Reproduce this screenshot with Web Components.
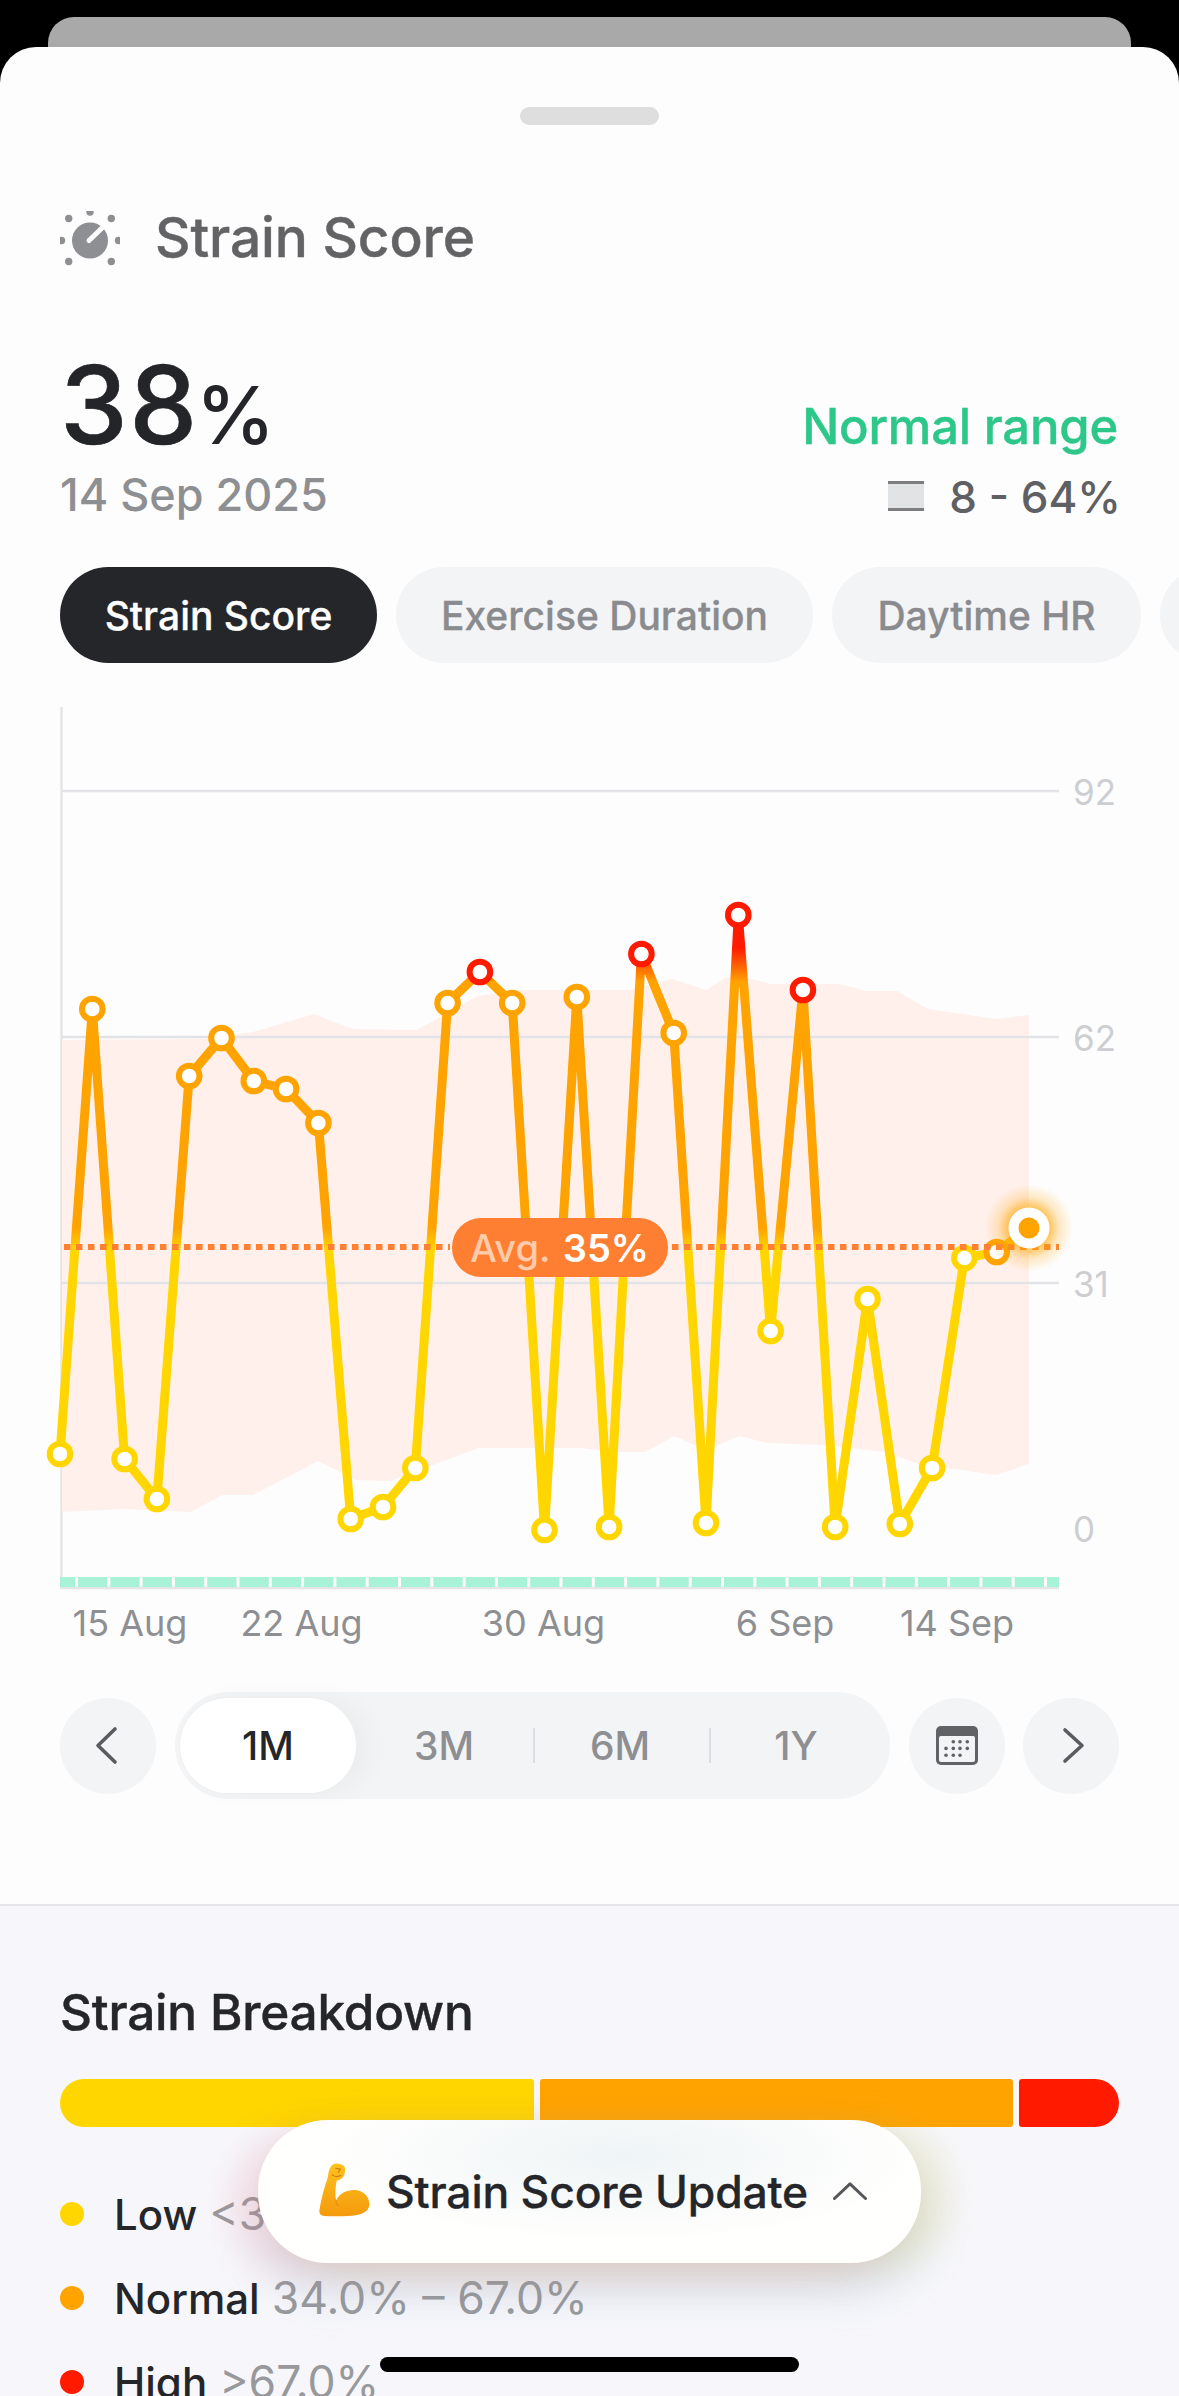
<!doctype html>
<html><head><meta charset="utf-8"><style>
html,body{margin:0;padding:0;background:#000;height:2396px;overflow:hidden;font-family:Inter,"Liberation Sans",sans-serif}
</style></head><body>
<app-shell>
<peek-card></peek-card>
<bottom-sheet>
  <sheet-handle></sheet-handle>
  <metric-header>Strain Score</metric-header>
  <score-summary></score-summary>
  <tab-row>
    <tab-chip active w="317">Strain Score</tab-chip>
    <tab-chip w="417">Exercise Duration</tab-chip>
    <tab-chip w="309">Daytime HR</tab-chip>
    <tab-chip w="200"></tab-chip>
  </tab-row>
  <trend-chart></trend-chart>
  <range-control></range-control>
  <breakdown-section>
    <legend-row color="#ffd600" name="Low" range="&lt;34.0%"></legend-row>
    <legend-row color="#ffa300" name="Normal" range="34.0% – 67.0%"></legend-row>
    <legend-row color="#ff1a00" name="High" range="&gt;67.0%"></legend-row>
  </breakdown-section>
</bottom-sheet>
<update-pill>Strain Score Update</update-pill>
<home-indicator></home-indicator>
</app-shell>
<script>
function def(name,html,init){
  customElements.define(name,class extends HTMLElement{
    connectedCallback(){
      if(this.shadowRoot)return;
      const r=this.attachShadow({mode:'open'});
      r.innerHTML=typeof html==='function'?html(this):html;
      if(init)init(this,r);
    }
  });
}
def('app-shell',`<style>:host{display:block;position:relative;width:1179px;height:2396px;overflow:hidden;background:#000;padding-top:17px;box-sizing:border-box}</style><slot></slot>`);
def('peek-card',`<style>:host{display:block;height:30px;margin:0 48px;background:#a9a9aa;border-radius:26px 26px 0 0}</style>`);
def('bottom-sheet',`<style>:host{display:block;background:#fdfdfd;border-radius:36px 36px 0 0;height:2349px;overflow:hidden}</style><slot></slot>`);
def('sheet-handle',`<style>:host{display:block;width:139px;height:18px;margin:60px auto 0;background:#dedede;border-radius:9px}</style>`);
def('metric-header',`<style>
:host{display:flex;align-items:center;height:64px;margin:84px 0 0 60px;font-size:55px;font-weight:500;color:#636366;letter-spacing:-.1px}
svg{display:block;flex:none;margin-right:35px;margin-top:-1px}
.t{margin-bottom:8px;-webkit-text-stroke:.4px #636366}
</style>
<svg width="60" height="60" viewBox="62 212 60 60"><g fill="#8e8f92"><circle cx="92" cy="241.5" r="18"/><circle cx="92" cy="213" r="3.7"/><circle cx="70.7" cy="219.5" r="3.7"/><circle cx="113.3" cy="219.5" r="3.7"/><circle cx="63.5" cy="241.5" r="3.7"/><circle cx="120.5" cy="241.5" r="3.7"/><circle cx="70.7" cy="262.5" r="3.7"/><circle cx="113.3" cy="262.5" r="3.7"/></g><path d="M91 241.5L104.5 228.5" stroke="#fdfdfd" stroke-width="5" stroke-linecap="round"/></svg><span class="t"><slot></slot></span>`);
def('score-summary',`<style>
:host{display:block;margin:77px 0 0 0;padding:0 61px 0 60px}
.row{display:flex;justify-content:space-between;align-items:baseline;height:110px}
.big{font-size:108px;line-height:110px;font-weight:500;color:#242528;letter-spacing:1.5px;-webkit-text-stroke:.6px #242528}
.pct{font-size:80px;font-weight:500;letter-spacing:0;margin-left:-3px;-webkit-text-stroke:0}
.status{font-size:49px;line-height:50px;font-weight:500;color:#2ec78a;letter-spacing:-.2px;-webkit-text-stroke:.4px #2ec78a}
.row2{margin-top:10px;height:50px}
.date{font-size:45px;line-height:50px;font-weight:500;color:#8e8f92}
.range{font-size:44px;line-height:50px;font-weight:500;color:#5f6063;display:flex;align-items:center;gap:25px;margin-right:-3px}
.range i{display:block;box-sizing:border-box;width:36px;height:30px;background:#e2e3e5;border-top:3px solid #7d7d80;border-bottom:3px solid #7d7d80;margin-top:-2px}
</style>
<div class="row"><div class="big">38<span class="pct">%</span></div><div class="status">Normal range</div></div>
<div class="row row2"><div class="date">14 Sep 2025</div><div class="range"><i></i><span>8 - 64%</span></div></div>`);
def('tab-row',`<style>:host{display:flex;gap:19px;margin-top:47px;padding-left:60px;height:96px;overflow:hidden}</style><slot></slot>`);
def('tab-chip',h=>`<style>
:host{display:flex;flex:none;align-items:center;justify-content:center;box-sizing:border-box;width:${h.getAttribute('w')}px;height:96px;border-radius:48px;background:${h.hasAttribute('active')?'#25262a':'#f3f4f6'};color:${h.hasAttribute('active')?'#fff':'#8a8b8e'};font-size:39px;font-weight:500;white-space:nowrap;-webkit-text-stroke:.3px currentColor}
</style><slot></slot>`);

/* chart */
const Y=[1454,1009,1459,1499,1076,1038,1081,1089,1123,1519,1507,1468,1003,972,1003,1530,997,1527,954,1033,1523,915,1331,990,1527,1299,1524,1468,1258,1252,1228];
const X=Y.map((_,i)=>60+32.3*i);
const topC="62,1040 203,1039 253,1032 314,1014 352,1029 417,1030 478,996 520,990 630,990 672,979 706,990 725,978 740,976 771,984 840,984 866,991 897,991 928,1009 996,1019 1029,1015";
const botC="1029,1464 996,1475 962,1470 924,1466 885,1452 824,1445 767,1443 740,1436 706,1450 674,1436 645,1452 618,1452 580,1448 536,1448 478,1448 390,1481 356,1480 318,1461 253,1495 222,1495 191,1512 126,1509 62,1512";
function ringColor(i){const y=Y[i];if(y<=995)return '#ff1a00';if(i===29)return '#ffa300';if(y<1245)return '#ffa300';return '#ffd600';}
function chartSvg(){
  let rings='';
  for(let i=0;i<30;i++)rings+=`<circle cx="${X[i].toFixed(1)}" cy="${Y[i]}" r="10.3" fill="#fff" stroke="${ringColor(i)}" stroke-width="6"/>`;
  let seg='';
  for(let i=0;i<32;i++){const a=i==0?60:78+32.3*(i-1);const b=Math.min(75+32.3*i,1059);if(a<1059)seg+=`<rect x="${a.toFixed(1)}" y="1577" width="${(i==31?1059-a:b-a).toFixed(1)}" height="10"/>`;}
  const grids=[791,1037,1283].map(y=>`<line x1="62" x2="1059" y1="${y}" y2="${y}"/>`).join('');
  const ylab=[[92,805],[62,1051],[31,1297],[0,1542]].map(([t,y])=>`<text x="1073" y="${y}">${t}</text>`).join('');
  const xlab=[['15 Aug',130],['22 Aug',301.5],['30 Aug',543.5],['6 Sep',785],['14 Sep',957]].map(([t,x])=>`<text x="${x}" y="1636" text-anchor="middle">${t}</text>`).join('');
  return `<svg width="1179" height="950" viewBox="0 700 1179 950" xmlns="http://www.w3.org/2000/svg">
  <defs>
   <linearGradient id="lg" gradientUnits="userSpaceOnUse" x1="0" x2="0" y1="900" y2="1540">
    <stop offset="0" stop-color="#ff1a00"/><stop offset="${(948-900)/640}" stop-color="#ff1a00"/>
    <stop offset="${(982-900)/640}" stop-color="#ffa300"/><stop offset="${(1228-900)/640}" stop-color="#ffa300"/>
    <stop offset="${(1250-900)/640}" stop-color="#ffd600"/><stop offset="1" stop-color="#ffd600"/>
   </linearGradient>
   <radialGradient id="glow"><stop offset=".45" stop-color="#ffa300" stop-opacity=".65"/><stop offset=".7" stop-color="#ffa300" stop-opacity=".22"/><stop offset="1" stop-color="#ffa300" stop-opacity="0"/></radialGradient>
  </defs>
  <line x1="61.5" x2="61.5" y1="707" y2="1588" stroke="#e4e5e7" stroke-width="2.5"/>
  <polygon points="${topC} ${botC}" fill="#fff0eb"/>
  <g stroke="#e2e3e6" stroke-width="2.5">${grids}</g>
  <line x1="60" x2="1059" y1="1588" y2="1588" stroke="#e4e5e7" stroke-width="2.5"/>
  <g fill="#a8f2d8">${seg}</g>
  <polyline points="${X.map((x,i)=>x.toFixed(1)+','+Y[i]).join(' ')}" fill="none" stroke="url(#lg)" stroke-width="9" stroke-linejoin="miter" stroke-miterlimit="3"/>
  ${rings}
  <line x1="64" x2="450" y1="1247" y2="1247" stroke="#ff8033" stroke-width="6" stroke-dasharray="6.5 5.5"/>
  <line x1="672" x2="1059" y1="1247" y2="1247" stroke="#ff8033" stroke-width="6" stroke-dasharray="6.5 5.5"/>
  <circle cx="1029" cy="1228" r="44" fill="url(#glow)"/>
  <circle cx="1029" cy="1228" r="15.5" fill="#ffa300" stroke="#fff" stroke-width="10"/>
  <rect x="452" y="1218" width="216" height="59" rx="29" fill="#ff7f32"/>
  <text x="470" y="1262" font-size="38" font-weight="500" fill="#fff" fill-opacity=".6">Avg.</text>
  <text x="649" y="1262" font-size="38" font-weight="600" fill="#fff" text-anchor="end">35%</text>
  <g font-size="35" fill="#cdced1">${ylab}</g>
  <g font-size="36" fill="#8e8f92">${xlab}</g>
  </svg>`;
}
def('trend-chart',()=>`<style>:host{display:block;height:950px;margin-top:37px;font-family:Inter,"Liberation Sans",sans-serif}svg{display:block}</style>${chartSvg()}`);

def('round-button',`<style>:host{display:flex;flex:none;align-items:center;justify-content:center;width:96px;height:96px;border-radius:50%;background:#f3f4f6}</style><slot></slot>`);
def('range-control',`<style>
:host{display:flex;align-items:center;margin-top:42px;padding:0 60px;height:107px}
.seg{flex:none;box-sizing:border-box;width:715px;height:107px;margin:0 19px;padding:6px 5px;background:#f3f4f6;border-radius:54px;display:grid;grid-template-columns:repeat(4,176px);align-items:stretch;font-size:39px;font-weight:500;color:#8e8f92}
.seg div{display:flex;align-items:center;justify-content:center}
.on{background:#fff;border-radius:48px;color:#25262a;box-shadow:0 0 0 1px #eeeff0,14px 0 26px rgba(0,0,0,.035)}
.sep{background:linear-gradient(#dcdde0,#dcdde0) 1px 50%/2px 35px no-repeat}
svg{display:block}
</style>
<round-button><svg width="96" height="96" viewBox="0 0 96 96"><path d="M55 31L38 47.5L55 64" fill="none" stroke="#5a5b5e" stroke-width="3.6" stroke-linecap="round" stroke-linejoin="round"/></svg></round-button>
<div class="seg"><div class="on">1M</div><div>3M</div><div class="sep">6M</div><div class="sep">1Y</div></div>
<round-button><svg width="96" height="96" viewBox="909 1698 96 96">
<rect x="936" y="1726" width="42" height="39" rx="5" fill="#616265"/><rect x="939" y="1736" width="36" height="26" rx="2" fill="#f3f4f6"/>
<g fill="#616265">${[[953.3,1741.7],[960,1741.7],[967.3,1741.7],[946,1748.4],[953.3,1748.4],[960,1748.4],[967.3,1748.4],[946,1755.3],[953.3,1755.3],[960,1755.3]].map(p=>`<circle cx="${p[0]}" cy="${p[1]}" r="1.8"/>`).join('')}</g></svg></round-button>
<round-button style="margin-left:18px"><svg width="96" height="96" viewBox="0 0 96 96"><path d="M42 32L59 47.5L42 63" fill="none" stroke="#5a5b5e" stroke-width="3.6" stroke-linecap="round" stroke-linejoin="round"/></svg></round-button>`);

def('breakdown-section',`<style>
:host{display:block;margin-top:105px;border-top:2.5px solid #e6e6e9;background:#f7f7fb;padding:0 60px;height:520px}
h2{margin:0;padding-top:78px;font-size:49.5px;line-height:56px;font-weight:500;color:#25262a;letter-spacing:-.2px;-webkit-text-stroke:.4px #25262a}
.bar{display:flex;gap:6px;height:48px;margin-top:38.5px}
.bar div{border-radius:3px}
.a{flex:474 0 0;background:#ffd600;border-radius:24px 3px 3px 24px!important}
.b{flex:473 0 0;background:#ffa300}
.c{flex:100 0 0;background:#ff1a00;border-radius:3px 24px 24px 3px!important}
.list{display:flex;flex-direction:column;gap:34px;margin-top:62.5px}
</style>
<h2>Strain Breakdown</h2>
<div class="bar"><div class="a"></div><div class="b"></div><div class="c"></div></div>
<div class="list"><slot></slot></div>`);
def('legend-row',h=>`<style>
:host{display:flex;align-items:baseline;height:50px;line-height:50px;font-size:42px;font-weight:500;color:#25262a;white-space:nowrap}
i{display:block;align-self:center;width:24px;height:24px;border-radius:50%;background:${h.getAttribute('color')};margin-right:30px;flex:none}
span{color:#98999c;font-size:44.5px;font-weight:400;margin-left:12px}
</style><i></i>${h.getAttribute('name')}<span>${h.getAttribute('range').replace(/</g,'&lt;').replace(/>/g,'&gt;')}</span>`);
def('update-pill',`<style>
:host{position:absolute;left:258px;top:2120px;width:663px;height:143px;box-sizing:border-box;display:flex;align-items:center;padding-left:61px;border-radius:70px;font-size:44.5px;font-weight:500;color:#25262a;letter-spacing:-.2px;white-space:nowrap;-webkit-text-stroke:.3px #25262a;
background:radial-gradient(ellipse 45% 60% at 55% 25%,rgba(225,235,240,.55),rgba(255,255,255,0)),#fffffd;
box-shadow:-26px 12px 36px rgba(255,110,125,.16),26px 6px 36px rgba(205,195,90,.24),0 26px 50px rgba(110,150,190,.24)}
svg{display:block;flex:none}
.m{margin-right:16px;margin-top:-4px}
.c{margin-left:25px;margin-top:-2px}
</style>
<svg class="m" width="51" height="54" viewBox="57 46 153 164"><defs><linearGradient id="e" x1="0" x2="0" y1="0" y2="1"><stop offset="0" stop-color="#ffc21f"/><stop offset="1" stop-color="#f49a0c"/></linearGradient></defs><path d="M100 50C110 44 128 50 134 58C138 70 134 88 124 94C118 98 112 98 110 100C106 118 104 140 108 160C118 138 140 128 162 128C190 128 210 148 209 172C208 194 185 204 155 206C125 208 95 208 72 207C60 206 55 198 58 186C62 160 72 120 82 92C86 78 84 60 100 50Z" fill="url(#e)"/><path d="M107 62l14 3-6 9M96 82c8 6 18 6 26 2" fill="none" stroke="#c9780c" stroke-width="3.5" stroke-linecap="round"/><path d="M108 160c-2 8 2 14 8 16" fill="none" stroke="#d98a12" stroke-width="3" stroke-linecap="round"/></svg>
<slot></slot>
<svg class="c" width="34" height="18" viewBox="0 0 34 18"><path d="M1.5 16.5L17 1.8L32.5 16.5" fill="none" stroke="#55565a" stroke-width="3" stroke-linecap="round" stroke-linejoin="round"/></svg>`);
def('home-indicator',`<style>:host{position:absolute;left:380px;top:2357px;width:419px;height:15px;border-radius:8px;background:#000}</style>`);
</script>
</body></html>
